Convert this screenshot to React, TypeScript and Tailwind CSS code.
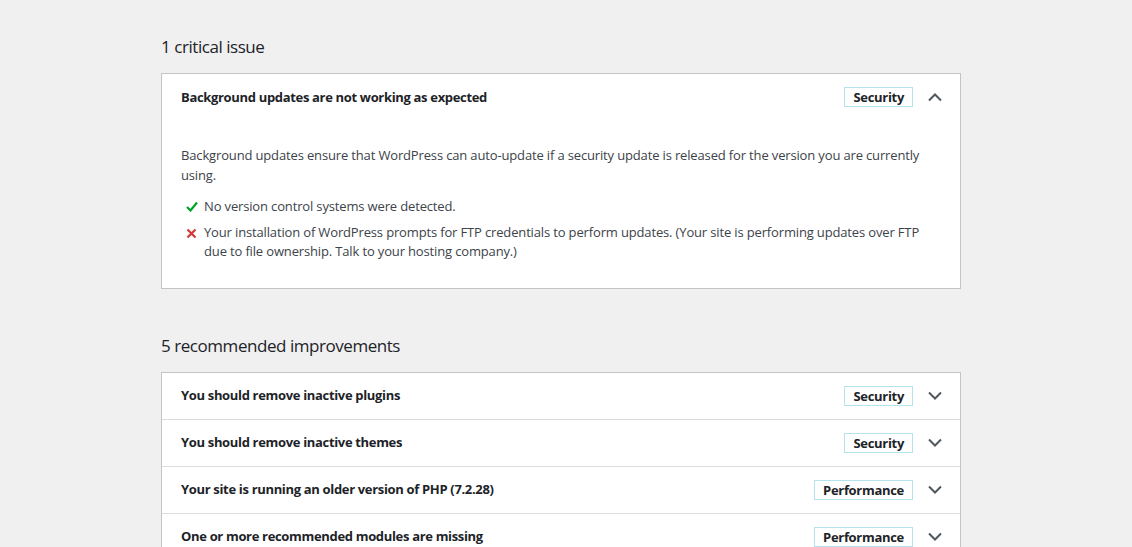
import { useState } from "react";

type Item = {
  title: string;
  badge: string;
};

const improvements: Item[] = [
  { title: "You should remove inactive plugins", badge: "Security" },
  { title: "You should remove inactive themes", badge: "Security" },
  { title: "Your site is running an older version of PHP (7.2.28)", badge: "Performance" },
  { title: "One or more recommended modules are missing", badge: "Performance" },
  { title: "Some files are not writable", badge: "Performance" },
];

function Chevron({ open }: { open?: boolean }) {
  return (
    <svg width="16" height="10" viewBox="0 0 16 10" className="shrink-0">
      <path
        d={open ? "M2 8.5 L8 2.5 L14 8.5" : "M2 1.5 L8 7.5 L14 1.5"}
        fill="none"
        stroke="#50575e"
        strokeWidth="2"
      />
    </svg>
  );
}

function Badge({ label }: { label: string }) {
  return (
    <span className="border border-[#b4e3ee] px-2 leading-[18px] text-[13px] font-bold tracking-[-0.3px] text-[#1d2327]">
      {label}
    </span>
  );
}

function Trigger({ item, open, first }: { item: Item; open?: boolean; first?: boolean }) {
  return (
    <div
      className={
        "box-content flex h-[46px] items-center pl-[19px] pr-[18px] " +
        (first ? "" : "border-t border-[#dcdcde]")
      }
    >
      <span className="flex-1 pt-px text-[13px] font-bold tracking-[-0.33px] text-[#1d2327]">
        {item.title}
      </span>
      <Badge label={item.badge} />
      <span className="ml-[14px] -mr-px">
        <Chevron open={open} />
      </span>
    </div>
  );
}

export default function App() {
  const [openIdx] = useState(-1);

  return (
    <div
      className="min-h-screen bg-[#f0f0f1] text-[#3c434a]"
      style={{ fontFamily: "'Open Sans', 'Noto Sans', sans-serif" }}
    >
      <div className="mx-auto w-[800px] pt-[35px] -translate-x-[5px]">
        <h2 className="text-[17px] leading-[24px] tracking-[-0.45px] text-[#1d2327]">1 critical issue</h2>
        <div className="mt-[14px] border border-[#c3c4c7] bg-white">
          <Trigger item={{ title: "Background updates are not working as expected", badge: "Security" }} open first />
          <div className="px-[19px] pt-[26px] pb-[26px] text-[13px] leading-[19.5px] tracking-[-0.15px]">
            <p>
              Background updates ensure that WordPress can auto-update if a security update is released
              for the version you are currently using.
            </p>
            <ul className="mt-[12px] space-y-[6px]">
              <li className="flex gap-[6px] pl-[5px]">
                <span className="w-[12px] shrink-0 pt-[4px]">
                  <svg width="12" height="11" viewBox="0 0 12 11">
                    <path d="M1 6 L4.5 9.5 L11 1.5" fill="none" stroke="#00a32a" strokeWidth="2.2" />
                  </svg>
                </span>
                <span>No version control systems were detected.</span>
              </li>
              <li className="flex gap-[6px] pl-[5px]">
                <span className="w-[12px] shrink-0 pt-[5px]">
                  <svg width="11" height="11" viewBox="0 0 11 11">
                    <path d="M1.5 1.5 L9.5 9.5 M9.5 1.5 L1.5 9.5" fill="none" stroke="#d63638" strokeWidth="2.2" />
                  </svg>
                </span>
                <span className="pr-[20px]">
                  Your installation of WordPress prompts for FTP credentials to perform updates. (Your site
                  is performing updates over FTP due to file ownership. Talk to your hosting company.)
                </span>
              </li>
            </ul>
          </div>
        </div>

        <h2 className="mt-[45px] text-[17px] leading-[24px] tracking-[-0.45px] text-[#1d2327]">
          5 recommended improvements
        </h2>
        <div className="mt-[14px] border border-[#c3c4c7] bg-white">
          {improvements.map((it, i) => (
            <Trigger key={it.title} item={it} open={openIdx === i} first={i === 0} />
          ))}
        </div>
      </div>
    </div>
  );
}
